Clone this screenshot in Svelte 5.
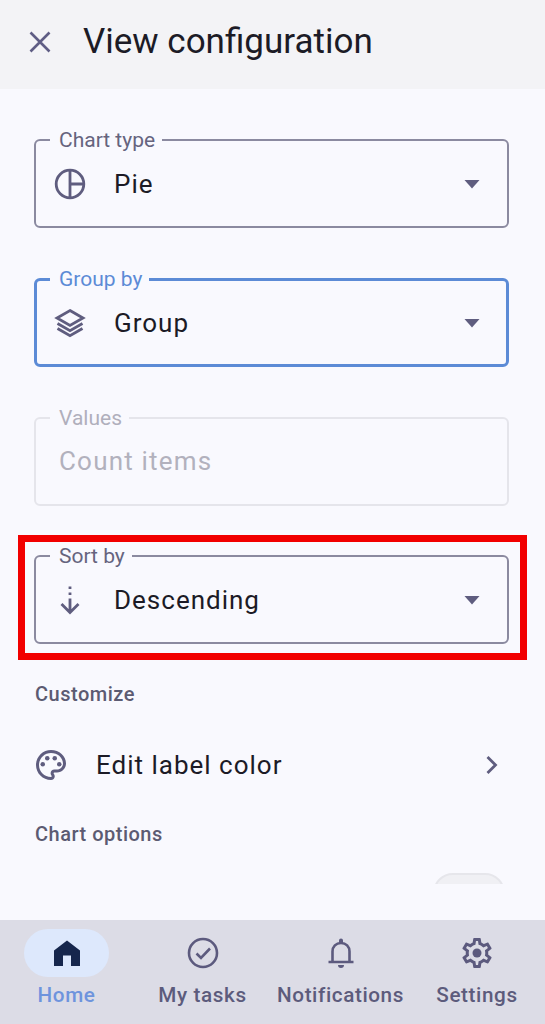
<script lang="ts">
	// View configuration sheet with the notched select fields and bottom nav.
	const tabs = [
		{ label: 'Home', active: true },
		{ label: 'My tasks' },
		{ label: 'Notifications' },
		{ label: 'Settings' }
	];
</script>

{#snippet caret()}
	<svg class="caret" viewBox="0 0 16 10" width="16" height="10"><path d="M0.5 1h15L8 9.5z" /></svg>
{/snippet}

<div class="screen">
	<header class="topbar">
		<svg class="close" viewBox="0 0 24 24" width="24" height="24">
			<path d="M2.5 2.5l19 19M21.5 2.5l-19 19" />
		</svg>
		<h1>View configuration</h1>
	</header>

	<main class="body">
		<div class="fields">
			<fieldset class="field">
				<legend>Chart type</legend>
				<div class="value">
					<svg class="lead" viewBox="0 0 32 32" width="32" height="32">
						<circle cx="16" cy="16" r="13.8" />
						<path d="M16 2.2v27.6M16 16h13.8" />
					</svg>
					<span>Pie</span>
					{@render caret()}
				</div>
			</fieldset>

			<fieldset class="field focused">
				<legend>Group by</legend>
				<div class="value">
					<svg class="lead" viewBox="0 0 32 32" width="32" height="32">
						<path d="M16 3.500L29 11l-13 7.500L3 11z" />
						<path d="M3.500 16.500L16 23.700l12.500-7.200" />
						<path d="M3.500 21.500L16 28.700l12.500-7.200" />
					</svg>
					<span>Group</span>
					{@render caret()}
				</div>
			</fieldset>

			<fieldset class="field disabled">
				<legend>Values</legend>
				<div class="value"><span>Count items</span></div>
			</fieldset>

			<div class="highlight">
				<fieldset class="field">
					<legend>Sort by</legend>
					<div class="value">
						<svg class="lead" viewBox="0 0 32 32" width="32" height="32">
							<path class="dots" d="M16 2.500v2.500M16 8.500v2.500" />
							<path d="M16 14.500v14M7.500 20l8.500 8.500 8.500-8.500" />
						</svg>
						<span>Descending</span>
						{@render caret()}
					</div>
				</fieldset>
			</div>
		</div>

		<h2 class="section first">Customize</h2>
		<div class="row">
			<svg class="palette" viewBox="0 0 24 24" width="36" height="36">
				<path d="M12 22C6.49 22 2 17.51 2 12S6.49 2 12 2s10 4.04 10 9c0 3.31-2.69 6-6 6h-1.77c-.28 0-.5.22-.5.5 0 .12.05.23.13.33.41.47.64 1.06.64 1.67 0 1.38-1.12 2.5-2.5 2.5zm0-18c-4.41 0-8 3.59-8 8s3.59 8 8 8c.28 0 .5-.22.5-.5 0-.16-.08-.28-.14-.35-.41-.46-.63-1.05-.63-1.65 0-1.38 1.12-2.5 2.5-2.5H16c2.21 0 4-1.79 4-4 0-3.86-3.59-7-8-7z" />
				<circle cx="6.5" cy="11.5" r="1.5" />
				<circle cx="9.5" cy="7.5" r="1.5" />
				<circle cx="14.5" cy="7.5" r="1.5" />
				<circle cx="17.5" cy="11.5" r="1.5" />
			</svg>
			<span>Edit label color</span>
			<svg class="chevron" viewBox="0 0 14 20" width="14" height="20"><path d="M2.5 2l8 8-8 8" /></svg>
		</div>

		<h2 class="section">Chart options</h2>
		<div class="switch-row"><div class="switch"></div></div>
	</main>

	<nav class="tabs">
		{#each tabs as tab}
			<div class="tab" class:active={tab.active}>
				<div class="pill">
					{#if tab.label === 'Home'}
						<svg viewBox="0 0 28 28" width="28" height="28">
							<path class="solid" d="M14 1.500L27 11.500V27H18V16.500H10V27H1V11.500z" />
						</svg>
					{:else if tab.label === 'My tasks'}
						<svg viewBox="0 0 32 32" width="32" height="32">
							<circle class="line" cx="16" cy="16" r="14" />
							<path class="line" d="M9.500 16.500l4.500 4.500 9-9.500" />
						</svg>
					{:else if tab.label === 'Notifications'}
						<svg viewBox="0 0 32 32" width="32" height="32">
							<path class="line" d="M3.500 25h25M7.500 25V14.500C7.500 9.500 11 6 16 6s8.500 3.500 8.500 8.500V25" />
							<path class="fill" d="M14 3.500a2 2 0 0 1 4 0V7h-4zM13 28h6a3 3 0 0 1-6 0z" />
						</svg>
					{:else}
						<svg viewBox="0 0 24 24" width="36" height="36">
							<path class="fill" d="M19.43 12.98c.04-.32.07-.64.07-.98 0-.34-.03-.66-.07-.98l2.11-1.65c.19-.15.24-.42.12-.64l-2-3.46c-.09-.16-.26-.25-.44-.25-.06 0-.12.01-.17.03l-2.49 1c-.52-.4-1.08-.73-1.69-.98l-.38-2.65C14.46 2.18 14.25 2 14 2h-4c-.25 0-.46.18-.49.42l-.38 2.65c-.61.25-1.17.59-1.69.98l-2.49-1c-.06-.02-.12-.03-.18-.03-.17 0-.34.09-.43.25l-2 3.46c-.13.22-.07.49.12.64l2.11 1.65c-.04.32-.07.65-.07.98 0 .33.03.66.07.98l-2.11 1.65c-.19.15-.24.42-.12.64l2 3.46c.09.16.26.25.44.25.06 0 .12-.01.17-.03l2.49-1c.52.4 1.08.73 1.69.98l.38 2.65c.03.24.24.42.49.42h4c.25 0 .46-.18.49-.42l.38-2.65c.61-.25 1.17-.59 1.69-.98l2.49 1c.06.02.12.03.18.03.17 0 .34-.09.43-.25l2-3.46c.12-.22.07-.49-.12-.64l-2.11-1.65zm-1.98-1.71c.04.31.05.52.05.73 0 .21-.02.43-.05.73l-.14 1.13.89.7 1.08.84-.7 1.21-1.27-.51-1.04-.42-.9.68c-.43.32-.84.56-1.25.73l-1.06.43-.16 1.13-.2 1.35h-1.4l-.19-1.35-.16-1.13-1.06-.43c-.43-.18-.83-.41-1.23-.71l-.91-.7-1.06.43-1.27.51-.7-1.21 1.08-.84.89-.7-.14-1.13c-.03-.31-.05-.54-.05-.74s.02-.43.05-.73l.14-1.13-.89-.7-1.08-.84.7-1.21 1.27.51 1.04.42.9-.68c.43-.32.84-.56 1.25-.73l1.06-.43.16-1.13.2-1.35h1.39l.19 1.35.16 1.13 1.06.43c.43.18.83.41 1.23.71l.91.7 1.06-.43 1.27-.51.7 1.21-1.07.85-.89.7.14 1.13z" />
							<circle class="fill" cx="12" cy="12" r="3" />
						</svg>
					{/if}
				</div>
				<span>{tab.label}</span>
			</div>
		{/each}
	</nav>
</div>

<style>
	:global(body) {
		background: #f9f9fe;
	}

	.screen {
		display: flex;
		flex-direction: column;
		height: 1024px;
		font-family: Roboto, sans-serif;
		color: #1c1b26;
		background: #f9f9fe;
		overflow: hidden;
	}

	.topbar {
		display: flex;
		align-items: center;
		gap: 31px;
		flex: none;
		height: 89px;
		padding: 0 0 6px 28px;
		box-sizing: border-box;
		background: #f3f3f6;
	}

	.topbar h1 {
		margin: 0;
		font-size: 35px;
		font-weight: 400;
		line-height: 44px;
	}

	.close path {
		fill: none;
		stroke: #5f5d84;
		stroke-width: 2.6;
	}

	.body {
		flex: 1;
		min-height: 0;
		padding: 39px 36px 0 34px;
		overflow: hidden;
	}

	.fields {
		display: flex;
		flex-direction: column;
		gap: 39px;
	}

	.field {
		margin: 0;
		padding: 0 17px 10px 20px;
		min-width: 0;
		border: 2px solid #8b8aa0;
		border-radius: 6px;
	}

	.field legend {
		margin-inline-start: -6px;
		padding: 0 7px 0 9px;
		font-size: 21px;
		line-height: 24px;
		color: #66647e;
	}

	.value {
		display: flex;
		align-items: center;
		height: 64px;
		font-size: 26px;
		letter-spacing: 1px;
	}

	.value span {
		flex: 1;
		margin-left: 30px;
	}

	.lead {
		flex: none;
		margin-left: -2px;
		margin-right: -2px;
		width: 32px;
	}

	.lead path,
	.lead circle {
		fill: none;
		stroke: #5f5d7f;
		stroke-width: 2.8;
	}

	.caret {
		flex: none;
		margin-right: 10px;
		fill: #5f5d7f;
	}

	.focused {
		border: 3px solid #5c8bd6;
		padding-left: 19px;
		padding-right: 16px;
		padding-bottom: 9px;
	}

	.focused legend {
		color: #5c8bd6;
	}

	.disabled {
		border-color: #e5e5eb;
	}

	.disabled legend {
		color: #b0afbc;
	}

	.disabled .value {
		height: 62px;
		margin-bottom: 2px;
		letter-spacing: 1.2px;
		color: #b2b1bd;
	}

	.disabled .value span {
		margin-left: 3px;
	}

	.highlight {
		margin: -10px -18px -16px -16px;
		padding: 2px 11px 9px 9px;
		border: 7px solid #f20000;
	}

	.section {
		margin: 27px 0 0 1px;
		font-size: 20px;
		font-weight: 500;
		line-height: 24px;
		letter-spacing: 0.5px;
		color: #5c5b72;
	}

	.section.first {
		margin-top: 38px;
	}

	.row {
		display: flex;
		align-items: center;
		height: 60px;
		margin-top: 29px;
		font-size: 26px;
		letter-spacing: 1px;
	}

	.row span {
		flex: 1;
		margin-left: 21px;
	}

	.palette {
		flex: none;
		margin-left: -1px;
		margin-right: 6px;
		fill: #5f5d7f;
	}

	.chevron {
		flex: none;
		margin-right: 10px;
		fill: none;
		stroke: #5f5d7f;
		stroke-width: 2.8;
	}

	.switch-row {
		display: flex;
		justify-content: flex-end;
		height: 11px;
		margin-top: 27px;
		padding-right: 4px;
		overflow: hidden;
	}

	.switch {
		width: 72px;
		height: 40px;
		box-sizing: border-box;
		border: 2px solid #e6e6eb;
		border-radius: 20px;
		background: #f0f0f4;
	}

	.tabs {
		display: grid;
		grid-template-columns: 133px 139px 137px 136px;
		flex: none;
		height: 104px;
		padding-top: 9px;
		box-sizing: border-box;
		background: #dcdce6;
	}

	.tab {
		display: flex;
		flex-direction: column;
		align-items: center;
		font-size: 20.7px;
		font-weight: 500;
		line-height: 24px;
		letter-spacing: 0.6px;
		color: #5c5b7c;
		white-space: nowrap;
	}

	.tab span {
		margin-top: 6px;
	}

	.pill {
		display: flex;
		align-items: center;
		justify-content: center;
		width: 85px;
		height: 48px;
		border-radius: 24px;
	}

	.active .pill {
		background: #dde8fc;
	}

	.active {
		color: #6e94dd;
	}

	.solid {
		fill: #16264c;
	}

	.line {
		fill: none;
		stroke: #5c5a7e;
		stroke-width: 2.6;
	}

	.fill {
		fill: #5c5a7e;
	}
</style>
